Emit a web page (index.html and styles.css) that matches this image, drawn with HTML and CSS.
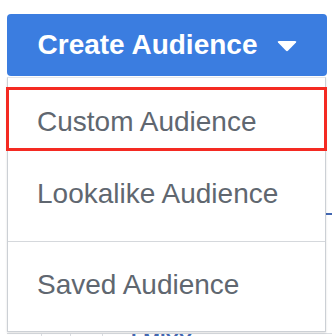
FILE: index.html
```html
<!DOCTYPE html>
<html lang="en">
<head>
  <meta charset="UTF-8">
  <title>Create Audience</title>
  <link rel="stylesheet" href="styles.css">
</head>
<body>
  <div class="page">
    <div class="dropdown">
      <a href="javascript:;" class="create-btn">
        <span>Create Audience</span>
        <svg class="caret" width="20" height="11" viewBox="0 0 20 11"><path d="M1 1.5 Q0 0 2 0 H18 Q20 0 19 1.5 L11.2 9.6 Q10 10.8 8.8 9.6 Z" fill="#fff"/></svg>
      </a>
      <div class="menu">
        <div class="menu-item selected">Custom Audience<span class="mark"></span></div>
        <div class="menu-item">Lookalike Audience</div>
        <div class="menu-sep"></div>
        <div class="menu-item">Saved Audience</div>
      </div>
    </div>
    <div class="behind">
      <div class="link-tick"></div>
      <div class="table-row">
        <span class="cell c1"></span>
        <span class="cell c2"></span>
        <span class="cell c3"></span>
        <span class="cell name">LMIXX</span>
      </div>
    </div>
  </div>
</body>
</html>
```

FILE: styles.css
```css
body {
  margin: 0;
  background: #fff;
  font-family: "Liberation Sans", Arial, sans-serif;
}
a {
  text-decoration: none;
}
.page {
  width: 332px;
  height: 336px;
  overflow: hidden;
  box-sizing: border-box;
  padding: 14px 5px 0 7px;
}
.dropdown {
  position: relative;
  z-index: 2;
}
.create-btn {
  height: 62px;
  display: flex;
  justify-content: center;
  align-items: center;
  gap: 20px;
  background: #3b7de0;
  border-radius: 4px;
  color: #fff;
  font-size: 28px;
  font-weight: bold;
  padding-left: 1px;
}
.caret {
  margin-top: 2px;
}
.menu {
  position: absolute;
  top: 63px;
  left: 0;
  right: 1px;
  background: #fff;
  border: 1px solid #ccd0d5;
  border-top-color: #e4e6eb;
  padding: 9px 0;
  box-shadow: 0 1px 2px rgba(0, 0, 0, 0.12);
}
.menu-item {
  position: relative;
  height: 72px;
  line-height: 70px;
  padding-left: 29px;
  color: #606770;
  font-size: 28px;
}
.mark {
  position: absolute;
  top: 0;
  left: -2px;
  right: -2px;
  height: 64px;
  box-sizing: border-box;
  border: 3px solid #f42a22;
}
.menu-sep {
  height: 1px;
  background: #d5d8dc;
  margin: 10px 0 8px;
}
.behind {
  position: relative;
  height: 260px;
}
.link-tick {
  position: absolute;
  top: 137px;
  right: -5px;
  width: 6px;
  height: 2px;
  background: #4267b2;
}
.table-row {
  position: absolute;
  top: 257px;
  left: 0;
  right: -5px;
  height: 30px;
  display: flex;
  border-top: 1px solid #dadde1;
  background: #fff;
}
.cell {
  border-right: 1px solid #dadde1;
}
.c1 {
  width: 34px;
}
.c2 {
  width: 28px;
}
.c3 {
  width: 31px;
}
.name {
  border: none;
  padding-left: 28px;
  line-height: 14px;
  color: #4267b2;
  font-weight: bold;
  font-size: 20px;
}
```
